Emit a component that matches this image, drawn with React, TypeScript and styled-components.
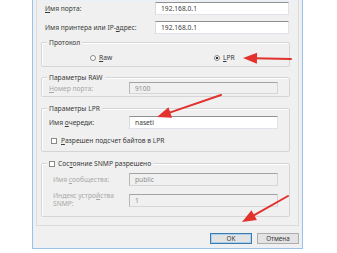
import React from 'react'
import styled, { createGlobalStyle } from 'styled-components'

const GlobalStyle = createGlobalStyle`
  html, body {
    margin: 0;
    padding: 0;
    background: #ffffff;
  }
  body {
    font-family: "Noto Sans", "DejaVu Sans", sans-serif;
    font-size: 6.7px;
    color: #3a3a3a;
  }
`

const Page = styled.div`
  position: relative;
  width: 337px;
  height: 253px;
  overflow: hidden;
  background: #ffffff;
`

const Window = styled.div`
  margin-left: 32px;
  width: 271px;
  height: 249px;
  box-sizing: border-box;
  border: 1px solid #9cc0e6;
  border-top: none;
  box-shadow: inset 0 0 0 1px #e9f0f8;
  background: #f0f0f0;
  display: flex;
  flex-direction: column;
`

const Panel = styled.div`
  margin-left: 3px;
  width: 263px;
  height: 226px;
  box-sizing: border-box;
  border: 1px solid #dcdcdc;
  border-top: none;
  padding: 0 8px 0 4px;
  display: flex;
  flex-direction: column;
`

const Row = styled.div<{ $top: number }>`
  margin-top: ${p => p.$top}px;
  padding-left: 4px;
  display: grid;
  grid-template-columns: 110px 134px;
  align-items: center;
`

const Label = styled.span<{ $disabled?: boolean }>`
  color: ${p => (p.$disabled ? '#a8a8a8' : '#3a3a3a')};
  line-height: 8px;
  white-space: nowrap;
`

const Input = styled.div<{ $disabled?: boolean; $h?: number }>`
  height: ${p => p.$h ?? 13}px;
  box-sizing: border-box;
  background: ${p => (p.$disabled ? '#f0f0f0' : '#ffffff')};
  border: 1px solid ${p => (p.$disabled ? '#d6d6d6' : '#e2e3ea')};
  border-top-color: ${p => (p.$disabled ? '#a3a3a3' : '#8e8f8f')};
  border-left-color: ${p => (p.$disabled ? '#b8b8b8' : '#dadbe0')};
  color: ${p => (p.$disabled ? '#8f8f8f' : '#3a3a3a')};
  padding-left: 5px;
  display: flex;
  align-items: center;
  white-space: nowrap;
`

const Group = styled.div<{ $top: number; $h: number }>`
  position: relative;
  margin-top: ${p => p.$top}px;
  height: ${p => p.$h}px;
  box-sizing: border-box;
  border: 1px solid #d5d5d5;
  border-radius: 2px;
  box-shadow: inset 1px 1px 0 #ffffff;
`

const Legend = styled.div`
  position: absolute;
  left: 5px;
  top: -5px;
  padding: 0 2px;
  background: #f0f0f0;
  line-height: 9px;
  display: flex;
  align-items: center;
  gap: 3px;
  white-space: nowrap;
`

const GroupRow = styled.div<{ $top: number; $indent: number }>`
  margin-top: ${p => p.$top}px;
  padding-left: ${p => p.$indent}px;
  display: flex;
  align-items: center;
`

const GroupLabel = styled.div<{ $w: number }>`
  width: ${p => p.$w}px;
  flex: none;
`

const GroupInput = styled.div`
  width: 149px;
  flex: none;
`

const Options = styled.div`
  margin-top: 11px;
  display: flex;
  padding-left: 48px;
`

const Option = styled.label<{ $w: number }>`
  width: ${p => p.$w}px;
  display: flex;
  align-items: center;
  gap: 3px;
  line-height: 8px;
`

const Radio = styled.span<{ $on?: boolean }>`
  width: 6px;
  height: 6px;
  box-sizing: border-box;
  border-radius: 50%;
  border: 1px solid #8a8a8a;
  background: ${p => (p.$on ? 'radial-gradient(circle, #333 0 1.3px, #fff 1.6px)' : '#fff')};
`

const Check = styled.span`
  width: 6px;
  height: 6px;
  box-sizing: border-box;
  border: 1px solid #8a8a8a;
  background: #ffffff;
`

const CheckRow = styled.div`
  margin-top: 8px;
  padding-left: 9px;
  display: flex;
  align-items: center;
  gap: 4px;
  line-height: 8px;
`

const Stacked = styled.span`
  display: block;
  line-height: 8px;
  color: #a8a8a8;
`

const Buttons = styled.div`
  margin-top: 7px;
  padding-right: 3px;
  display: flex;
  justify-content: flex-end;
  gap: 5px;
`

const Button = styled.div<{ $default?: boolean }>`
  width: 42px;
  height: 11px;
  box-sizing: border-box;
  border: 1px solid ${p => (p.$default ? '#3d7bad' : '#adadad')};
  background: #e3e3e3;
  box-shadow: ${p => (p.$default ? 'inset 0 0 0 1px #a9d0f0' : 'none')};
  font-size: 6.3px;
  line-height: 9px;
  text-align: center;
  color: #333;
`

const Overlay = styled.svg`
  position: absolute;
  left: 0;
  top: 0;
  pointer-events: none;
`

type ArrowProps = { x1: number; y1: number; x2: number; y2: number }

const Arrow = ({ x1, y1, x2, y2 }: ArrowProps) => {
  const dx = x2 - x1
  const dy = y2 - y1
  const len = Math.hypot(dx, dy)
  const ux = dx / len
  const uy = dy / len
  const hl = 14
  const hw = 5.5
  const bx = x2 - ux * hl
  const by = y2 - uy * hl
  const head = `${x2},${y2} ${bx - uy * hw},${by + ux * hw} ${bx + uy * hw},${by - ux * hw}`
  return (
    <g>
      <line x1={x1} y1={y1} x2={bx + ux * 3} y2={by + uy * 3} stroke="#e2322e" strokeWidth={2} strokeLinecap="round" />
      <polygon points={head} fill="#e2322e" />
    </g>
  )
}

export default function App() {
  return (
    <Page>
      <GlobalStyle />
      <Window>
        <Panel>
          <Row $top={2}>
            <Label><u>И</u>мя порта:</Label>
            <Input>192.168.0.1</Input>
          </Row>
          <Row $top={6}>
            <Label>Имя принтера или IP-<u>а</u>дрес:</Label>
            <Input>192.168.0.1</Input>
          </Row>

          <Group $top={8} $h={25}>
            <Legend>Протокол</Legend>
            <Options>
              <Option $w={124}>
                <Radio />
                <span><u>R</u>aw</span>
              </Option>
              <Option $w={40}>
                <Radio $on />
                <span><u>L</u>PR</span>
              </Option>
            </Options>
          </Group>

          <Group $top={10} $h={20}>
            <Legend>Параметры RAW</Legend>
            <GroupRow $top={4} $indent={7}>
              <GroupLabel $w={80}>
                <Label $disabled><u>Н</u>омер порта:</Label>
              </GroupLabel>
              <GroupInput>
                <Input $disabled $h={12}>9100</Input>
              </GroupInput>
            </GroupRow>
          </Group>

          <Group $top={11} $h={44}>
            <Legend>Параметры LPR</Legend>
            <GroupRow $top={7} $indent={7}>
              <GroupLabel $w={80}>
                <Label>Имя <u>о</u>череди:</Label>
              </GroupLabel>
              <GroupInput>
                <Input>naseti</Input>
              </GroupInput>
            </GroupRow>
            <CheckRow>
              <Check />
              <Label><u>Р</u>азрешен подсчет байтов в LPR</Label>
            </CheckRow>
          </Group>

          <Group $top={11} $h={54}>
            <Legend>
              <Check />
              <span>Сос<u>т</u>ояние SNMP разрешено</span>
            </Legend>
            <GroupRow $top={9} $indent={11}>
              <GroupLabel $w={76}>
                <Label $disabled>Имя <u>с</u>ообщества:</Label>
              </GroupLabel>
              <GroupInput>
                <Input $disabled>public</Input>
              </GroupInput>
            </GroupRow>
            <GroupRow $top={6} $indent={11}>
              <GroupLabel $w={76}>
                <Stacked>Индекс устро<u>й</u>ства<br />SNMP:</Stacked>
              </GroupLabel>
              <GroupInput>
                <Input $disabled>1</Input>
              </GroupInput>
            </GroupRow>
          </Group>
        </Panel>
        <Buttons>
          <Button $default>OK</Button>
          <Button>Отмена</Button>
        </Buttons>
      </Window>
      <Overlay width={337} height={253} viewBox="0 0 337 253">
        <Arrow x1={291} y1={59} x2={243} y2={58} />
        <Arrow x1={221} y1={95} x2={157} y2={117} />
        <Arrow x1={288} y1={196} x2={242} y2={222} />
      </Overlay>
    </Page>
  )
}
